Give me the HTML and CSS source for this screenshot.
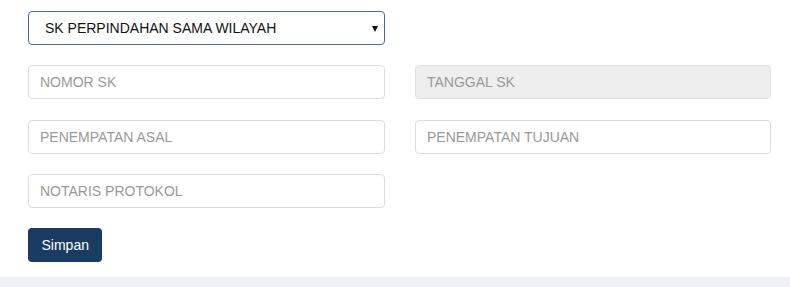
FILE: index.html
```html
<!DOCTYPE html>
<html lang="en">
<head>
  <meta charset="UTF-8">
  <title>SK Perpindahan</title>
  <link rel="stylesheet" href="styles.css">
</head>
<body>
  <div class="content">
    <form class="form-grid">
      <div class="select-wrap">
        <select class="form-control select-jenis">
          <option>SK PERPINDAHAN SAMA WILAYAH</option>
          <option>SK PERPINDAHAN BEDA WILAYAH</option>
        </select>
      </div>
      <div></div>

      <input type="text" class="form-control" placeholder="NOMOR SK">
      <input type="text" class="form-control" placeholder="TANGGAL SK" disabled>

      <input type="text" class="form-control" placeholder="PENEMPATAN ASAL">
      <input type="text" class="form-control" placeholder="PENEMPATAN TUJUAN">

      <input type="text" class="form-control" placeholder="NOTARIS PROTOKOL">
      <div></div>

      <div><button type="button" class="btn-simpan">Simpan</button></div>
    </form>
  </div>
  <div class="footer-band"></div>
</body>
</html>
```

FILE: styles.css
```css
body {
  margin: 0;
  font-family: "Liberation Sans", Arial, sans-serif;
  font-size: 14px;
  color: #333333;
  background: #ffffff;
}

.content {
  height: 277px;
  box-sizing: border-box;
  padding: 11px 19px 0 28px;
}

.form-grid {
  display: grid;
  grid-template-columns: 357px 356px;
  column-gap: 30px;
  row-gap: 20.25px;
}

.form-control {
  display: block;
  width: 100%;
  height: 34px;
  box-sizing: border-box;
  padding: 0 11px;
  border: 1px solid #dddddd;
  border-radius: 4px;
  background: #ffffff;
  font-family: inherit;
  font-size: 14px;
  color: #333333;
  outline: none;
}

.form-control::placeholder {
  color: #999999;
}

.form-control:disabled {
  background: #eeeeee;
  border-color: #e2e2e2;
}

.select-wrap {
  position: relative;
}

.select-jenis {
  appearance: none;
  -webkit-appearance: none;
  padding-left: 16px;
  border-color: #4a6a94;
  color: #111111;
}

.select-wrap::after {
  content: "";
  position: absolute;
  right: 7px;
  top: 15px;
  border-left: 3px solid transparent;
  border-right: 3px solid transparent;
  border-top: 6px solid #111111;
  pointer-events: none;
}

.btn-simpan {
  height: 34px;
  padding: 0 13.5px;
  border: none;
  border-radius: 4px;
  background: #1b3c62;
  color: #ffffff;
  font-family: inherit;
  font-size: 14px;
  cursor: pointer;
}

.footer-band {
  height: 10px;
  background: #f0f1f6;
}
```
